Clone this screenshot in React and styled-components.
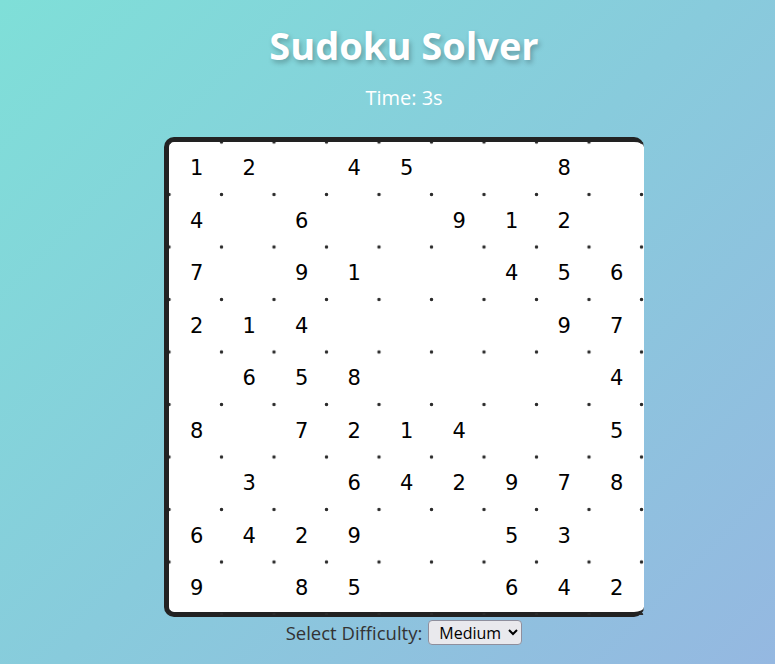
import React, { useState } from 'react';
import styled, { createGlobalStyle } from 'styled-components';

const GlobalStyle = createGlobalStyle`
  html, body {
    margin: 0;
    height: 100%;
  }
  body {
    background: linear-gradient(135deg, #7fdfd8 0%, #88cbdc 50%, #95b8e1 100%);
    font-family: "Open Sans", "Noto Sans", sans-serif;
  }
  #root {
    min-height: 100%;
  }
`;

const Page = styled.div`
  display: flex;
  flex-direction: column;
  align-items: center;
  padding: 19px 0 0 33px;
  height: 664px;
  box-sizing: border-box;
`;

const Title = styled.h1`
  margin: 0;
  font-family: "Open Sans", "Noto Sans", sans-serif;
  font-size: 38px;
  font-weight: 700;
  line-height: 52px;
  color: #fff;
  text-shadow: 2px 3px 5px rgba(0, 0, 0, 0.25);
`;

const Timer = styled.div`
  margin-top: 15px;
  font-size: 20px;
  line-height: 24px;
  color: #fff;
`;

const Board = styled.div`
  margin-top: 27px;
  width: 475px;
  height: 470px;
  border: 5px solid #222;
  border-right: 0;
  border-radius: 10px;
  background: #fff;
`;

const Grid = styled.div`
  display: grid;
  grid-template-columns: repeat(9, 52.5px);
  grid-template-rows: repeat(9, 52.5px);
  background-image: radial-gradient(circle, #2a2a2a 0, #2a2a2a 1.3px, transparent 2.1px);
  background-size: 52.5px 52.5px;
  background-position: -26.25px -26.25px;
`;

const Cell = styled.div`
  display: flex;
  align-items: center;
  justify-content: center;
  padding-left: 3px;
  font-family: "DejaVu Sans", Verdana, sans-serif;
  font-size: 21px;
  color: #000;
`;

const Controls = styled.div`
  display: flex;
  align-items: center;
  gap: 6px;
  margin-top: 3px;
  font-size: 18.5px;
  color: #333;
`;

const Select = styled.select`
  font-family: "Open Sans", "Noto Sans", sans-serif;
  font-size: 16px;
  width: 94px;
  height: 25px;
  padding: 0 4px 0 6px;
  color: #000;
  background: #e9e9ed;
  border: 1px solid #8f8f9d;
  border-radius: 4px;
`;

const puzzle = [
  [1, 2, 0, 4, 5, 0, 0, 8, 0],
  [4, 0, 6, 0, 0, 9, 1, 2, 0],
  [7, 0, 9, 1, 0, 0, 4, 5, 6],
  [2, 1, 4, 0, 0, 0, 0, 9, 7],
  [0, 6, 5, 8, 0, 0, 0, 0, 4],
  [8, 0, 7, 2, 1, 4, 0, 0, 5],
  [0, 3, 0, 6, 4, 2, 9, 7, 8],
  [6, 4, 2, 9, 0, 0, 5, 3, 0],
  [9, 0, 8, 5, 0, 0, 6, 4, 2],
];

export default function App() {
  const [difficulty, setDifficulty] = useState('medium');

  return (
    <Page>
      <GlobalStyle />
      <Title>Sudoku Solver</Title>
      <Timer>Time: 3s</Timer>
      <Board>
        <Grid>
          {puzzle.map((row, r) =>
            row.map((value, c) => (
              <Cell key={`${r}-${c}`}>{value || ''}</Cell>
            ))
          )}
        </Grid>
      </Board>
      <Controls>
        Select Difficulty:
        <Select value={difficulty} onChange={e => setDifficulty(e.target.value)}>
          <option value="easy">Easy</option>
          <option value="medium">Medium</option>
          <option value="hard">Hard</option>
        </Select>
      </Controls>
    </Page>
  );
}
